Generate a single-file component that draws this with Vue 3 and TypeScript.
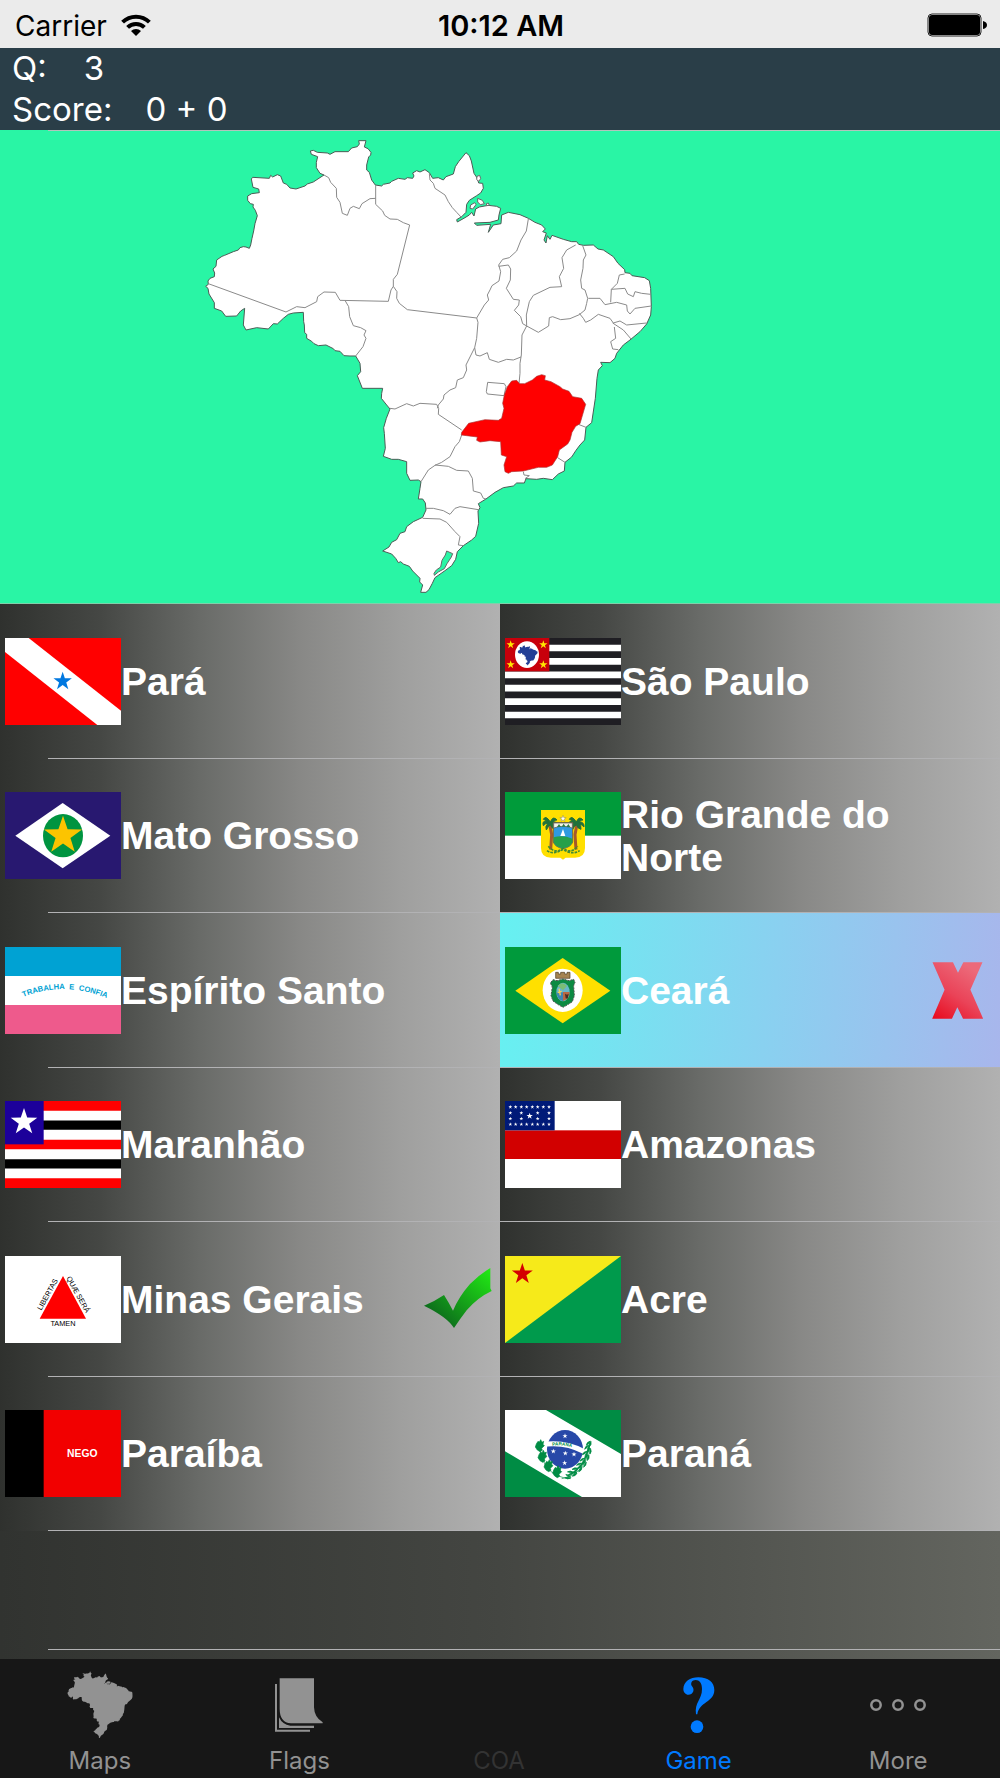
<script setup lang="ts">
interface Answer {
  id: string
  name: string
  result?: 'right' | 'wrong'
}

const answers: Answer[] = [
  { id: 'pa', name: 'Pará' },
  { id: 'sp', name: 'São Paulo' },
  { id: 'mt', name: 'Mato Grosso' },
  { id: 'rn', name: 'Rio Grande do Norte' },
  { id: 'es', name: 'Espírito Santo' },
  { id: 'ce', name: 'Ceará', result: 'wrong' },
  { id: 'ma', name: 'Maranhão' },
  { id: 'am', name: 'Amazonas' },
  { id: 'mg', name: 'Minas Gerais', result: 'right' },
  { id: 'ac', name: 'Acre' },
  { id: 'pb', name: 'Paraíba' },
  { id: 'pr', name: 'Paraná' },
]

const tabs = [
  { id: 'maps', label: 'Maps' },
  { id: 'flags', label: 'Flags' },
  { id: 'coa', label: 'COA' },
  { id: 'game', label: 'Game' },
  { id: 'more', label: 'More' },
]

// Points of an upright five-pointed star.
function star(cx: number, cy: number, r: number): string {
  const pts: string[] = []
  for (let i = 0; i < 10; i++) {
    const radius = i % 2 ? r * 0.39 : r
    const a = (Math.PI / 5) * i - Math.PI / 2
    pts.push(`${(cx + radius * Math.cos(a)).toFixed(1)},${(cy + radius * Math.sin(a)).toFixed(1)}`)
  }
  return pts.join(' ')
}

const spStars = [[17, 20], [115, 20], [17, 80], [115, 80]]
const amStars = [
  [16, 18], [32, 18], [49, 18], [65, 18], [82, 18], [98, 18], [115, 18], [132, 18],
  [16, 36], [49, 36], [98, 36], [132, 36], [16, 53], [49, 53], [98, 53], [132, 53],
  [16, 70], [32, 70], [49, 70], [65, 70], [82, 70], [98, 70], [115, 70], [132, 70],
]
const prStars = [[180, 78], [145, 124], [181, 130], [207, 133], [179, 159]]
const prLeaves = [[104, 108], [112, 140], [130, 168], [156, 186]]
const prSprigs = [
  [252, 100, -60], [247, 112, -60], [252, 122, -70], [241, 130, -50], [246, 141, -60],
  [234, 150, -45], [237, 161, -50], [224, 164, -35], [224, 175, -40], [211, 178, -25],
  [208, 190, -20], [197, 188, -10], [190, 200, 15],
]

const brazil =
  'M47 484L55 478 54 468 60 460 73 455 74 444 69 432 78 424 80 405 96 394 104 391 130 380 145 375 150 368 160 365 168 366 178 370 182 360 186 340 191 318 195 296 202 272 196 256 189 246 190 238 181 236 173 226 173 213 185 206 208 203 206 192 189 187 184 162 188 157 238 160 242 151 248 156 262 149 272 153 280 174 290 178 300 189 318 192 345 183 352 177 370 171 402 150 390 145 379 128 379 112 383 95 364 88 361 78 370 76 382 82 412 84 420 88 435 80 475 80 485 69 502 65 508 57 506 47 528 47 523 66 534 71 543 82 542 90 536 96 530 120 530 135 538 142 545 165 556 180 575 183 580 178 600 174 605 169 625 160 645 163 652 158 668 160 672 153 668 144 680 137 690 141 705 134 718 143' +
  'L728 160 745 158 760 165 768 155 790 147 796 125 806 110 828 83 838 92 844 108 852 145 862 160 866 174 878 175 880 190 872 204 860 212 838 226 830 238 828 262 815 275 800 284 802 291 825 278 838 270 845 262 852 273 857 252 868 246 895 241 920 244 932 250 927 270 925 285 900 292 853 294 860 301 902 298 895 322 910 300 933 296 935 270 955 262 990 269 1015 280 1035 292 1055 300 1066 312 1058 320 1069 324 1062 345 1068 354 1072 332 1080 343 1086 331 1120 343 1145 350 1160 350 1166 358 1180 361 1210 360 1224 372 1240 375 1270 395 1284 415 1304 434 1305 443 1320 445 1326 452 1364 458 1378 467 1382 490 1384 545 1382 570 1370 597 1350 620 1320 645 1300 660 1280 685 1275 700 1260 713' +
  'L1232 712 1237 722 1225 735 1221 760 1216 820 1205 893 1188 907 1184 945 1170 960 1158 976 1145 996 1125 1012 1123 1038 1105 1047 1087 1064 1060 1060 1040 1063 1008 1061 1003 1074 980 1074 970 1083 940 1088 915 1102 888 1122 865 1136 870 1148 864 1158 866 1195 857 1234 845 1245 820 1262 802 1280 797 1303 785 1322 765 1337 735 1358 727 1375 717 1394 708 1402 692 1402 698 1380 689 1371 690 1360 668 1338 658 1324 640 1317 632 1310 625 1313 617 1300 605 1287 578 1278 597 1266 605 1252 620 1244 630 1225 645 1220 650 1205 670 1190 698 1177 708 1155 706 1134 698 1122 685 1122 690 1090 693 1070 685 1065 660 1066 650 1045 650 1010 625 1003 605 1003 580 994 586 970 583 925 581 908 589 880 600 852 590 840 574 820 575 805 578 790 517 790 502 752 512 740 510 715 497 693' +
  'L480 693 462 692 450 679 435 677 430 671 408 660 385 662 372 656 365 649 350 640 350 628 344 623 343 600 341 590 340 562 310 564 295 568 280 580 262 597 250 596 235 612 200 608 168 615 160 600 164 550 152 558 140 573 107 574 95 558 73 550 73 533 57 507 54 490Z'

const minas =
  'M815 922L836 895 885 884 925 886 935 880 942 850 938 835 943 810 952 785 965 768 980 766 989 776 1004 776 1027 765 1040 754 1055 749 1066 752 1064 765 1083 770 1110 785 1118 792 1137 799 1148 815 1175 820 1187 838 1170 896 1157 904 1146 922 1140 945 1133 957 1108 975 1103 995 1087 1020 1070 1027 1045 1027 1000 1038 965 1040 955 1045 945 1040 942 1020 950 995 934 990 932 950 900 947 870 951 860 946 862 936 830 932 814 930Z'

// Inland state borders, in the same coordinate space as the outline.
const borders = [
  'M55 476L288 561 320 545 345 548 380 530 383 515 402 501 436 502 450 526 595 529 603 495 610 484 610 463 622 448 659 300',
  'M659 300L640 293 622 283 600 282 584 271 578 258 557 238 557 180',
  'M402 150L416 158 422 172 439 190 440 217 450 232 457 265 472 271 480 250 490 244 508 251 516 236 540 221 557 220',
  'M466 528L476 545 479 575 490 602 512 608 528 617 522 630 528 640 519 665 497 693',
  'M610 484L621 500 620 520 628 535 652 554 860 579',
  'M718 146L720 165 730 175 735 190 765 210 775 230 787 248 800 262 815 278',
  'M1015 282L1009 318 993 345 980 378 958 398 938 403 926 420 932 440 927 468 906 482 900 495 892 510 896 525 883 540 860 579 864 592 860 640 854 668 828 720 830 735 820 758 802 765 797 788 780 795 762 810 760 822 745 840 742 850',
  'M926 424L955 420 962 432 961 465 949 490 970 523 988 525 986 540 973 556 992 575 998 596 1010 603',
  'M1157 360L1130 375 1116 398 1121 430 1108 455 1115 485 1080 487 1030 511 1018 530 1009 570 1010 603 1045 622 1076 603 1078 578 1088 575 1112 584 1140 581 1168 569 1185 555 1190 535 1193 520 1185 495 1175 490 1172 465 1179 430 1180 405 1188 390 1178 362',
  'M1195 520L1230 520 1245 539 1280 532 1310 540 1312 558 1320 567 1335 550 1384 543',
  'M1168 565L1180 580 1187 592 1202 585 1225 568 1260 580 1270 594 1290 588 1310 600 1350 596 1370 594',
  'M1304 447L1288 450 1282 475 1264 493 1262 532',
  'M1264 493L1305 490 1313 507 1330 515 1335 500 1355 505 1382 508',
  'M1268 594L1300 615 1324 643 M1273 606L1277 640 1262 650 1268 672 1285 674',
  'M1010 603L996 630 994 690 990 715 990 745 987 776',
  'M854 668L858 690 870 693 892 683 898 703 925 712 950 703 970 705 993 696',
  'M600 850L615 852 650 836 670 843 690 835 740 838 746 850 745 868 815 915',
  'M815 930L808 950 795 965 780 995 755 1012 735 1021 715 1035 693 1070',
  'M735 1020L775 1024 800 1036 835 1038 847 1060 850 1098 872 1104 880 1120 888 1122',
  'M708 1150L730 1150 760 1157 780 1168 795 1150 810 1145 865 1154',
  'M698 1180L750 1182 770 1192 795 1220 810 1235 805 1260 820 1262',
  'M893 772L943 776 948 785 942 812 892 807 889 800Z',
  'M1165 898L1188 907 M1103 998L1125 1012 M1000 1040L1002 1050 1018 1052 1005 1061',
]
</script>

<template>
  <div class="app">
    <div class="status">
      <div class="carrier">
        <span>Carrier</span>
        <svg class="wifi" viewBox="0 0 30 22" aria-hidden="true">
          <g fill="none" stroke="#000" stroke-width="4">
            <path d="M1.600 8.200a19 19 0 0 1 26.800 0" />
            <path d="M6.600 13.400a12 12 0 0 1 16.800 0" />
          </g>
          <path d="M15 22l-5-5a7.200 7.200 0 0 1 10 0z" />
        </svg>
      </div>
      <time class="clock">10:12 AM</time>
      <svg class="battery" viewBox="0 0 60 24" aria-hidden="true">
        <rect x="1" y="1" width="53" height="22" rx="4" fill="#ebebeb" stroke="#222" />
        <rect x="2" y="2" width="51" height="20" rx="3" />
        <path d="M56 8q4 1 4 4t-4 4z" />
      </svg>
    </div>

    <header class="score">
      <p><span>Q:</span><span class="question">3</span></p>
      <p><span>Score:</span><span class="points">0 + 0</span></p>
    </header>

    <main class="main">
      <figure class="map">
        <svg viewBox="0 0 1000 473" role="img" aria-label="Map of Brazil with one state highlighted">
          <g transform="translate(190 -5) scale(.33333)" stroke="#666" stroke-width="3" stroke-linejoin="round">
            <path :d="brazil" fill="#fff" stroke="#4b5b55" />
            <path d="M861 154l8-3 3 10-6 8-6-6zM863 220l14 6 6 10-12 3-8-8zM889 236l6-2 3 7-8 1zM842 240l12-7 4 6-10 13-8-2z" fill="#fff" />
            <path d="M732 1345l7-10 13-9 4-20 10-16 4-12 18 8-4 10-13 20-8 15-18 10-12 10z" fill="#29f5a5" />
            <path v-for="line in borders" :key="line" :d="line" fill="none" stroke="#8a8a8a" />
            <path :d="minas" fill="#f00" stroke="#a33" stroke-width="2" />
          </g>
        </svg>
      </figure>

      <ul class="answers">
        <li v-for="a in answers" :key="a.id">
          <button type="button" class="answer" :class="{ picked: a.result === 'wrong' }">
            <svg class="flag" viewBox="0 0 348 261" aria-hidden="true">
              <g v-if="a.id === 'pa'">
                <rect width="348" height="261" fill="#f00" />
                <path d="M0 0H71L348 218V261H277L0 42z" fill="#fff" />
                <polygon :points="star(173, 130, 29)" fill="#0078e0" />
              </g>
              <g v-else-if="a.id === 'sp'">
                <rect width="348" height="261" fill="#1f1e23" />
                <path d="M0 30H348M0 70H348M0 110.500H348M0 150.500H348M0 191H348M0 231H348" stroke="#fff" stroke-width="20" />
                <rect width="133" height="100" fill="#c8000b" />
                <polygon v-for="s in spStars" :key="s.join()" :points="star(s[0], s[1], 13)" fill="#ffe600" />
                <ellipse cx="66" cy="50" rx="36" ry="40" fill="#fff" />
                <path :d="brazil" fill="#233f96" transform="translate(36 20) scale(.0445)" />
              </g>
              <g v-else-if="a.id === 'mt'">
                <rect width="348" height="261" fill="#281870" />
                <path d="M31 131L173 33 316 131 173 229z" fill="#fff" />
                <ellipse cx="174" cy="131" rx="60" ry="65" fill="#009440" />
                <polygon :points="star(174, 131, 60)" fill="#fcc400" />
              </g>
              <g v-else-if="a.id === 'rn'">
                <rect width="348" height="261" fill="#fff" />
                <rect width="348" height="131" fill="#009b3a" />
                <path d="M108 54H240V168Q240 197 210 197H182L174 203 166 197H138Q108 197 108 168z" fill="#ffdf00" />
                <path d="M134 96l6 32-3 45M216 96l-6 32 3 45" fill="none" stroke="#a5592a" stroke-width="9" />
                <g fill="#20713a" stroke="#20713a" stroke-width="3">
                  <path d="M136 90q-14-22-21-8 5 0 9 5-14 0-9 14 7-8 14-7-10 10-5 20 6-12 12-16 4 12 14 14 1-12-6-16 10 2 15 9 2-14-14-16 5-6 11-5-12-14-20 6z" />
                  <path d="M214 90q-14-22-21-8 5 0 9 5-14 0-9 14 7-8 14-7-10 10-5 20 6-12 12-16 4 12 14 14 1-12-6-16 10 2 15 9 2-14-14-16 5-6 11-5-12-14-20 6z" />
                </g>
                <path d="M145 92H203V150Q198 165 174 170 150 165 145 150z" fill="#2f9ae0" stroke="#7b6a3a" stroke-width="3" />
                <path d="M146 93H202V108Q174 98 146 108z" fill="#f4f4e8" stroke="#555" stroke-width="2" />
                <path d="M156 105l6-9 6 9zM170 104l6-9 6 9zM184 105l6-9 6 9z" fill="#2a7a45" />
                <path d="M146 136Q174 128 202 140V150Q198 164 174 169 150 164 146 150z" fill="#26a04a" />
                <path d="M166 132l8-21 7 21z" fill="#fff" />
                <path d="M130 163q20 24 44 6 24 18 44-6M126 176q20 14 48-4 28 18 50 4" fill="none" stroke="#3f8b35" stroke-width="5" stroke-dasharray="8 3" />
                <polygon :points="star(174, 80, 10)" fill="#fff" stroke="#555" stroke-width="1" />
              </g>
              <g v-else-if="a.id === 'es'">
                <rect width="348" height="261" fill="#fff" />
                <rect width="348" height="87" fill="#00a2d3" />
                <rect y="174" width="348" height="87" fill="#ee5a8c" />
                <path id="motto-arc" d="M44 155Q174 96 316 158" fill="none" />
                <text font-size="23" font-weight="700" fill="#00a2d3">
                  <textPath href="#motto-arc" startOffset="50%" text-anchor="middle">TRABALHA&#160; E&#160; CONFIA</textPath>
                </text>
              </g>
              <g v-else-if="a.id === 'ce'">
                <rect width="348" height="261" fill="#009a3c" />
                <path d="M31 131L173 33 316 131 173 229z" fill="#ffe000" />
                <ellipse cx="173" cy="130" rx="60" ry="65" fill="#fff" />
                <path d="M152 76h8v5h7v-5h12v5h7v-5h9v18H152z" fill="#a58352" stroke="#4c3a20" stroke-width="2" />
                <path d="M144 98l12 3 18-5 18 5 14-4 4 9-4 10 2 30-6 18-12 8-16 9-16-9-14-10-6-16 4-26-6-12z" fill="#0c8a42" stroke="#555" stroke-width="3" stroke-dasharray="6 3" />
                <ellipse cx="174" cy="135" rx="20" ry="28" fill="#69b6c8" />
                <path d="M154 136h20v27q-18-6-20-27z" fill="#3d87b4" />
                <path d="M174 135h20q-1 22-20 27z" fill="#b96842" />
                <path d="M158 117q14-16 28 0l-12 13z" fill="#7bbd75" />
                <path d="M162 125l4 20M158 137l12-4" stroke="#f2d25c" stroke-width="4" />
                <path d="M180 140l6 3 5-3-3 15-6-1z" fill="#462c22" />
              </g>
              <g v-else-if="a.id === 'ma'">
                <rect width="348" height="261" fill="#fff" />
                <path d="M0 14.500H348M0 130.500H348M0 246.500H348" stroke="#f00" stroke-width="29" />
                <path d="M0 72.500H348M0 188.500H348" stroke="#000" stroke-width="28" />
                <rect width="116" height="130" fill="#1c009a" />
                <polygon :points="star(57, 63, 42)" fill="#fff" />
              </g>
              <g v-else-if="a.id === 'am'">
                <rect width="348" height="261" fill="#fff" />
                <rect y="88" width="348" height="86" fill="#d20000" />
                <rect width="149" height="88" fill="#001a78" />
                <polygon v-for="s in amStars" :key="s.join()" :points="star(s[0], s[1], 6)" fill="#fff" />
                <polygon :points="star(74, 45, 10)" fill="#fff" />
              </g>
              <g v-else-if="a.id === 'mg'">
                <rect width="348" height="261" fill="#fff" />
                <path d="M174 60L104 188H243z" fill="#f00" />
                <g font-size="22" font-weight="400" text-anchor="middle">
                  <text x="174" y="209">TAMEN</text>
                  <text transform="translate(134 119) rotate(-61)">LIBERTAS</text>
                  <text transform="translate(213 119) rotate(61)">QUÆ SERÁ</text>
                </g>
              </g>
              <g v-else-if="a.id === 'ac'">
                <rect width="348" height="261" fill="#f6ea1a" />
                <path d="M348 0V261H0z" fill="#009a4c" />
                <polygon :points="star(52, 54, 33)" fill="#d40000" />
              </g>
              <g v-else-if="a.id === 'pb'">
                <rect width="348" height="261" fill="#f20000" />
                <rect width="116" height="261" />
                <text x="232" y="141" font-size="31" font-weight="700" fill="#fff" text-anchor="middle">NEGO</text>
              </g>
              <g v-else>
                <rect width="348" height="261" fill="#fff" />
                <path d="M123 0H348V132zM0 124L231 261H0z" fill="#008c44" />
                <ellipse cx="180" cy="118" rx="54" ry="58" fill="#2848a8" />
                <path d="M125 102Q184 96 236 124" fill="none" stroke="#fff" stroke-width="15" />
                <path id="band-arc" d="M142 107Q184 103 220 119" fill="none" />
                <text font-size="14" font-weight="700" fill="#008c44">
                  <textPath href="#band-arc">PARANÁ</textPath>
                </text>
                <polygon v-for="s in prStars" :key="s.join()" :points="star(s[0], s[1], 8)" fill="#fff" />
                <g fill="#008c44" stroke="#008c44" stroke-width="2">
                  <path v-for="l in prLeaves" :key="l.join()" d="M-10-6l5-8 4 3 4-8 4 8 5-3-2 9 4 4-8 8 2 6-7 4-8-5-6-9z" :transform="`translate(${l[0]} ${l[1]})`" />
                  <g v-for="l in prSprigs" :key="l.join()" :transform="`translate(${l[0]} ${l[1]}) rotate(${l[2]})`">
                    <path d="M-9-4Q0-8 8 0-2 1-9-4zM-9 6Q0 10 8 2-2 0-9 6z" />
                  </g>
                </g>
                <path d="M103 95Q108 200 196 206M254 95Q250 190 170 206" fill="none" stroke="#008c44" stroke-width="2" />
              </g>
            </svg>
            <span class="name">{{ a.name }}</span>
            <span class="mark">
              <svg v-if="a.result === 'right'" width="68" height="62" viewBox="0 0 204 186" role="img" aria-label="Correct">
                <defs>
                  <linearGradient id="tick-fill" x1="0" y1="1" x2="1" y2="0">
                    <stop offset=".2" stop-color="#0d701c" />
                    <stop offset="1" stop-color="#22ee14" />
                  </linearGradient>
                </defs>
                <path d="M0 113Q34 99 60 81 74 103 87 128 104 87 138 48 168 18 199 0V61L203 69Q160 89 128 127 108 153 90 180 70 147 0 113z" fill="url(#tick-fill)" />
              </svg>
              <svg v-else-if="a.result === 'wrong'" width="52" height="57" viewBox="0 0 154 170" role="img" aria-label="Wrong">
                <defs>
                  <linearGradient id="cross-fill" x1="0" y1="1" x2=".6" y2="0">
                    <stop offset="0" stop-color="#e8081c" />
                    <stop offset=".5" stop-color="#ea4358" />
                    <stop offset="1" stop-color="#ec6a7a" />
                  </linearGradient>
                </defs>
                <path d="M1 1H62L77 32 93 1H150L114 83 152 169H92L75 135 59 169H0L37 83z" fill="url(#cross-fill)" />
              </svg>
            </span>
          </button>
        </li>
      </ul>
      <div class="spare"></div>
    </main>

    <nav class="tabs">
      <a v-for="t in tabs" :key="t.id" :href="'#' + t.id" :class="['tab', t.id]">
        <svg v-if="t.id === 'maps'" width="66" height="68" viewBox="40 35 1354 1385" aria-hidden="true">
          <path :d="brazil" fill="#929292" />
        </svg>
        <svg v-else-if="t.id === 'flags'" width="48" height="54" viewBox="0 0 144 162" aria-hidden="true">
          <path d="M14 1H117V88Q118 118 143 133V136H48Q14 134 14 92z" fill="#929292" />
          <path d="M3 18V158H105" fill="none" stroke="#929292" stroke-width="6" />
          <path d="M12 118Q22 140 46 143H117V150H12z" fill="#929292" />
        </svg>
        <svg v-else-if="t.id === 'game'" width="32" height="56" viewBox="0 0 96 168" aria-hidden="true">
          <path d="M39 112C34 76 57 68 57 36 57 18 49 9 38 9 27 9 22 18 26 26 30 31 33 36 31 43 28 52 20 54 13 53 5 51 1 44 1 36 2 14 21 1 46 1 76 1 94 16 94 39 94 76 48 74 43 112z" fill="#007aff" />
          <circle cx="42" cy="149" r="19" fill="#007aff" />
        </svg>
        <svg v-else-if="t.id === 'more'" width="56" height="12" viewBox="0 0 56 12" aria-hidden="true">
          <g fill="none" stroke="#929292" stroke-width="2.500">
            <circle cx="6" cy="6" r="4.700" /><circle cx="28" cy="6" r="4.700" /><circle cx="50" cy="6" r="4.700" />
          </g>
        </svg>
        <span>{{ t.label }}</span>
      </a>
    </nav>
  </div>
</template>

<style>
body {
  margin: 0;
}
</style>

<style scoped>
.app {
  display: flex;
  flex-direction: column;
  min-height: 100vh;
  font-family: Inter, "Liberation Sans", sans-serif;
  background: linear-gradient(90deg, #313330, #444642 50%, #63655f);
}
.status {
  display: grid;
  grid-template-columns: 1fr auto 1fr;
  align-items: center;
  height: 48px;
  padding: 0 13px 0 15px;
  box-sizing: border-box;
  font-size: 28px;
  line-height: 48px;
  color: #000;
  background: #ebebeb;
}
.carrier {
  display: flex;
  align-items: center;
  gap: 14px;
}
.wifi {
  width: 30px;
  height: 22px;
}
.clock {
  padding-top: 2px;
  font-size: 29px;
  font-weight: 600;
}
.carrier span {
  padding-top: 2px;
}
.battery {
  justify-self: end;
  width: 60px;
  height: 24px;
}
.score {
  height: 82px;
  padding-left: 12px;
  font-size: 33px;
  line-height: 41px;
  color: #fff;
  background: #2a3e48;
}
.score p {
  display: flex;
  margin: 0;
}
.question {
  margin-left: 37px;
}
.points {
  margin-left: 33px;
}
.main {
  display: flex;
  flex: 1;
  flex-direction: column;
}
.map {
  margin: 0;
  background:
    linear-gradient(#b3c4bd, #b3c4bd) 48px 0 / 100% 1px no-repeat,
    #29f5a5;
  border-bottom: 1px solid #7fd0aa;
}
.map svg {
  display: block;
  width: 100%;
  height: 473px;
}
.answers {
  display: grid;
  flex: 1;
  grid-template-columns: 1fr 1fr;
  grid-auto-rows: 1fr;
  margin: 0;
  padding: 0;
  list-style: none;
}
.answers li {
  display: flex;
}
.answer {
  display: flex;
  flex: 1;
  align-items: center;
  min-height: 120px;
  padding: 0 7px 0 5px;
  font: 700 39px/43px "Liberation Sans", Arial, sans-serif;
  color: #fff;
  text-align: left;
  background:
    linear-gradient(#b2b2b4, #b2b2b4) 0 100% / 100% 1px no-repeat,
    linear-gradient(90deg, #2f312e, #454744 20%, #696b68 40%, #888886 60%, #9f9f9e 80%, #b1b1b1);
  border: 0;
}
.answers li:nth-child(odd) .answer {
  background-position: 48px 100%, 0 0;
}
.answer.picked {
  background:
    linear-gradient(#b2b2b4, #b2b2b4) 0 100% / 100% 1px no-repeat,
    linear-gradient(95deg, #66f1f1, #8ad0f0 55%, #a8b6ec);
}
.flag {
  flex: none;
  width: 116px;
  height: 87px;
}
.name {
  flex: 1;
}
.mark {
  display: flex;
  flex: none;
  justify-content: center;
  width: 70px;
}
.spare {
  height: 128px;
  background: linear-gradient(#b2b2b4, #b2b2b4) 48px 118px / 100% 1px no-repeat;
}
.tabs {
  display: grid;
  grid-template-columns: repeat(5, 1fr);
  height: 119px;
  padding-right: 2px;
  background: #171717;
}
.tab {
  display: grid;
  grid-template-rows: 90px 24px;
  justify-items: center;
  align-items: center;
  font-size: 24px;
  line-height: 24px;
  color: #929292;
  text-decoration: none;
}
.tab svg {
  margin-top: 2px;
}
.tab span {
  grid-row: 2;
}
.coa {
  color: #333;
}
.game {
  color: #007aff;
}
</style>
